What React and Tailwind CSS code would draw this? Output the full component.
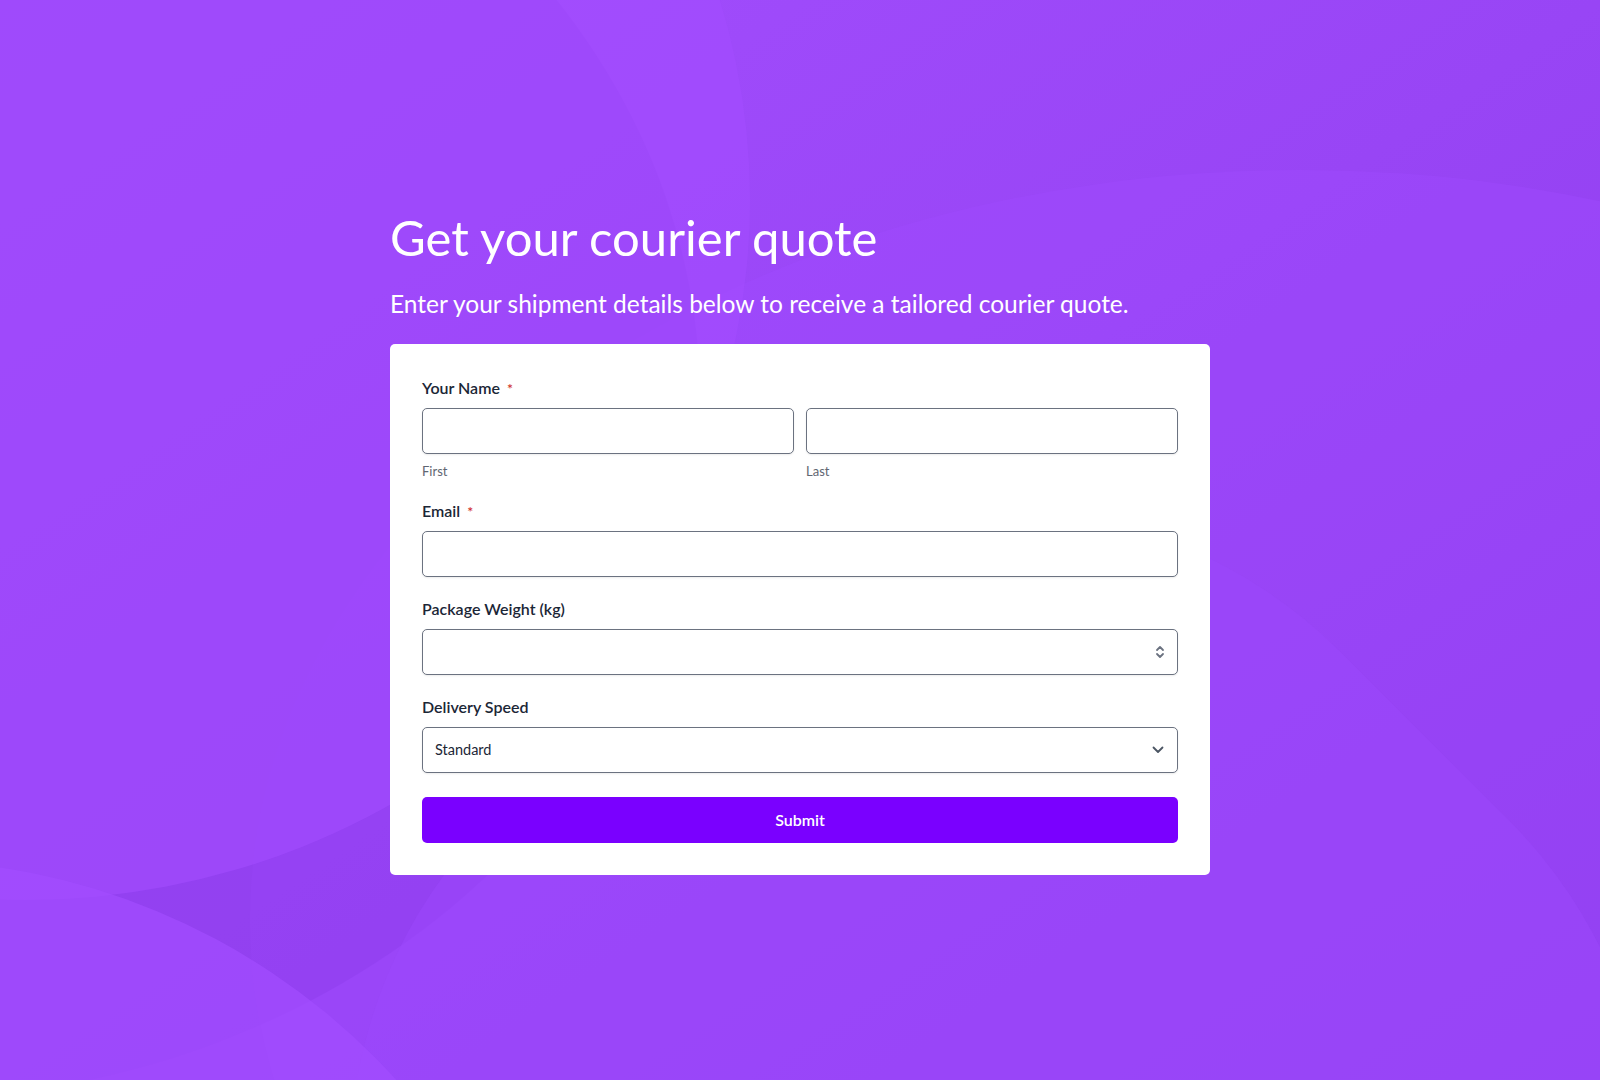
import React from "react";

const FONT = { fontFamily: "Lato, 'Open Sans', sans-serif" };

function Label({ children, required }) {
  return (
    <label className="mb-2 flex h-6 items-center text-[16px] font-semibold text-[#1b2636]">
      {children}
      {required && <span className="ml-[7px] mt-[3px] text-[14px] leading-none text-[#d0312d]">*</span>}
    </label>
  );
}

const inputCls =
  "block h-[46px] w-full rounded-[5px] border border-[#6b7280] bg-white px-3 text-[14.5px] text-[#1b2636] shadow-[0_1px_2px_rgba(0,0,0,0.08)] outline-none";

function UpDown() {
  return (
    <svg width="10" height="16" viewBox="0 0 10 16" fill="none" className="text-[#6b7280]">
      <path d="M2 6l3-3 3 3" stroke="currentColor" strokeWidth="1.8" strokeLinecap="round" strokeLinejoin="round" />
      <path d="M2 10l3 3 3-3" stroke="currentColor" strokeWidth="1.8" strokeLinecap="round" strokeLinejoin="round" />
    </svg>
  );
}

function ChevronDown() {
  return (
    <svg width="12" height="8" viewBox="0 0 12 8" fill="none" className="text-[#4b5563]">
      <path d="M1.5 1.5L6 6l4.5-4.5" stroke="currentColor" strokeWidth="1.8" strokeLinecap="round" strokeLinejoin="round" />
    </svg>
  );
}

export default function App() {
  return (
    <div
      className="relative flex min-h-screen items-center justify-center overflow-hidden bg-gradient-to-br from-[#a44fff] via-[#9845f5] to-[#8b3aea]"
      style={FONT}
    >
      {/* background shapes */}
      <div className="pointer-events-none absolute left-[250px] top-[170px] h-[1500px] w-[2100px] rounded-[50%] bg-[#a04cff]/40" />
      <div className="pointer-events-none absolute -left-[900px] -top-[300px] h-[1400px] w-[1600px] rounded-[50%] bg-[#8a38e8]/35" />
      <div className="pointer-events-none absolute -left-[700px] -top-[500px] h-[1400px] w-[1450px] rounded-[50%] bg-[#a34dff]/60" />
      <div className="pointer-events-none absolute left-[400px] top-[560px] h-[1200px] w-[1200px] rotate-45 rounded-[40%] bg-[#9c48fb]/50" />
      <div className="pointer-events-none absolute -left-[770px] top-[860px] h-[1340px] w-[1340px] rounded-full bg-[#a24dff]/70" />

      <div className="relative flex w-[820px] flex-col">
        <h1 className="text-[49px] font-normal leading-[62px] text-white">Get your courier quote</h1>
        <p className="mt-[20px] text-[24.5px] leading-8 text-white">
          Enter your shipment details below to receive a tailored courier quote.
        </p>

        <form className="mt-[24px] rounded-[5px] bg-white px-8 pb-8 pt-8">
          <Label required>Your Name</Label>
          <div className="grid grid-cols-2 gap-3">
            <div>
              <input className={inputCls} />
              <div className="mt-[7px] h-5 text-[13px] leading-5 text-[#5f6672]">First</div>
            </div>
            <div>
              <input className={inputCls} />
              <div className="mt-[7px] h-5 text-[13px] leading-5 text-[#5f6672]">Last</div>
            </div>
          </div>

          <div className="mt-[18px]">
            <Label required>Email</Label>
            <input className={inputCls} />
          </div>

          <div className="mt-5">
            <Label>Package Weight (kg)</Label>
            <div className="relative">
              <input className={inputCls} />
              <div className="absolute right-[13px] top-1/2 -translate-y-1/2">
                <UpDown />
              </div>
            </div>
          </div>

          <div className="mt-5">
            <Label>Delivery Speed</Label>
            <div className={`${inputCls} relative flex items-center`}>
              <span>Standard</span>
              <div className="absolute right-[13px] top-1/2 -translate-y-1/2">
                <ChevronDown />
              </div>
            </div>
          </div>

          <button
            type="button"
            className="mt-6 flex h-[46px] w-full items-center justify-center rounded-[5px] bg-[#7a00ff] text-[16px] font-semibold text-white"
          >
            Submit
          </button>
        </form>
      </div>
    </div>
  );
}
